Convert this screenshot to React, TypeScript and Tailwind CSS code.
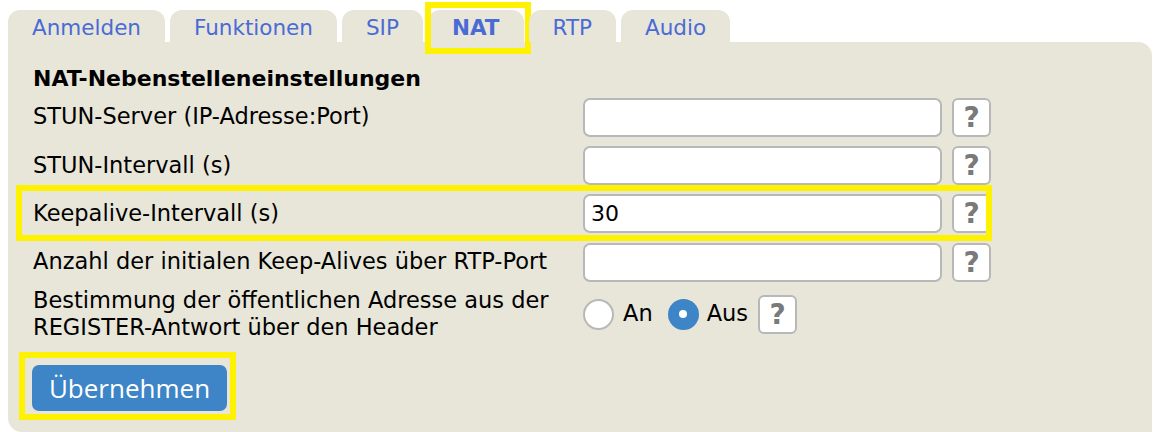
import React from "react";

const tabs = ["Anmelden", "Funktionen", "SIP", "NAT", "RTP", "Audio"];

const verdana = "font-['DejaVu_Sans',Verdana,sans-serif]";

function HelpButton() {
  return (
    <button
      type="button"
      className={`ml-[10px] flex h-[39px] w-[39px] shrink-0 items-center justify-center rounded-[6px] border-2 border-[#b8b8b8] bg-white pt-[1px] text-[28px] font-bold leading-none text-[#7a7a7a] ${verdana}`}
    >
      ?
    </button>
  );
}

function TextRow({
  label,
  value = "",
  highlight = false,
}: {
  label: string;
  value?: string;
  highlight?: boolean;
}) {
  return (
    <div className="relative flex h-[48.3px] w-[958px] items-center">
      {highlight && (
        <span className="pointer-events-none absolute top-[-5px] bottom-[-3px] left-[-17px] right-[-1px] border-[6px] border-[#fff200]" />
      )}
      <span className="w-[550px] shrink-0">{label}</span>
      <input
        readOnly
        value={value}
        className={`h-[39px] w-[359px] rounded-[7px] border-2 border-[#b8b8b8] bg-white px-[6px] text-[22px] text-black outline-none ${verdana}`}
      />
      <HelpButton />
    </div>
  );
}

export default function App() {
  return (
    <div className={`h-[432px] w-[1154px] overflow-hidden bg-white pl-[8px] pt-[10px] text-[22.5px] text-black ${verdana}`}>
      <div className="flex gap-[5px]">
        {tabs.map((t) => (
          <div
            key={t}
            className={`relative flex h-[32px] items-center rounded-t-[12px] bg-[#e8e6d9] px-[24px] pt-[4px] text-[21.5px] text-[#4a6bd6] ${
              t === "NAT" ? "font-bold" : ""
            }`}
          >
            {t === "NAT" && (
              <span className="pointer-events-none absolute top-[-8px] bottom-[-12px] left-[-3px] right-[-7px] border-[6px] border-[#fff200]" />
            )}
            {t}
          </div>
        ))}
      </div>
      <div className="h-[390px] w-[1144px] rounded-tr-[14px] rounded-bl-[14px] bg-[#e8e6d9] pl-[25px] pt-[23px]">
        <h2 className="text-[22px] font-bold leading-[28px]">NAT-Nebenstelleneinstellungen</h2>
        <TextRow label="STUN-Server (IP-Adresse:Port)" />
        <TextRow label="STUN-Intervall (s)" />
        <TextRow label="Keepalive-Intervall (s)" value="30" highlight />
        <TextRow label="Anzahl der initialen Keep-Alives über RTP-Port" />
        <div className="flex h-[56px] items-center">
          <span className="w-[550px] shrink-0 leading-[27px]">
            Bestimmung der öffentlichen Adresse aus der
            <br />
            REGISTER-Antwort über den Header
          </span>
          <span className="h-[31px] w-[31px] rounded-full border-2 border-[#b8b8b8] bg-white" />
          <span className="ml-[9px]">An</span>
          <span className="ml-[15px] flex h-[31px] w-[31px] items-center justify-center rounded-full bg-[#3d85c6]">
            <span className="h-[8px] w-[8px] rounded-full bg-white" />
          </span>
          <span className="ml-[8px]">Aus</span>
          <HelpButton />
        </div>
        <div className="-ml-[14px] mt-[10px] inline-block border-[6px] border-[#fff200] pb-[3px] pl-[7px] pr-[3px] pt-[7px]">
          <button
            type="button"
            className="flex h-[46px] w-[195px] items-center justify-center rounded-[7px] bg-[#3d85c6] font-['Open_Sans',sans-serif] text-[26px] text-white"
          >
            Übernehmen
          </button>
        </div>
      </div>
    </div>
  );
}
